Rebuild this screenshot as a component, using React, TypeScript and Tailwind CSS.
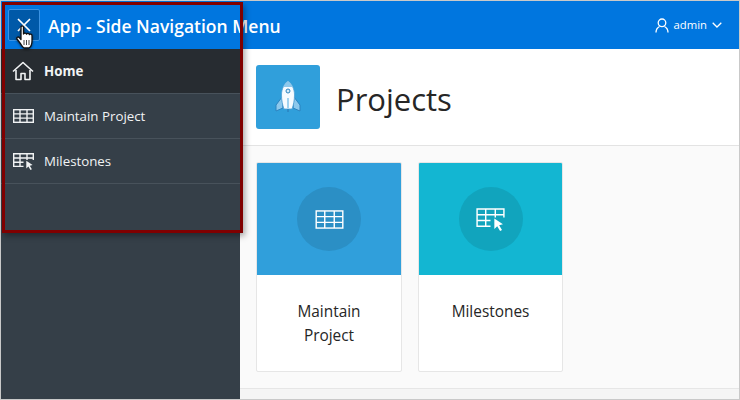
import React from "react";

const font = { fontFamily: '"Open Sans", "Noto Sans", sans-serif' };

function GridIcon({ className = "" }: { className?: string }) {
  return (
    <svg viewBox="0 0 30 20" className={className} fill="none" stroke="currentColor" strokeWidth="1.500">
      <rect x="1" y="1" width="28" height="18" />
      <path d="M1 7h28M1 13h28M10 1v18M20 1v18" />
    </svg>
  );
}

function GridCursorIcon({ className = "" }: { className?: string }) {
  return (
    <svg viewBox="0 0 30 24" className={className} fill="none" stroke="currentColor" strokeWidth="1.500">
      <path d="M15 19H1V1h28v9M1 7h28M1 13h14M10 1v18M20 1v9" />
      <path d="M19 11l0 11 3-3 3 5 2-1-3-5 4-1z" fill="currentColor" stroke="none" />
    </svg>
  );
}

function HomeIcon() {
  return (
    <svg viewBox="0 0 22 20" className="w-[22px] h-[20px]" fill="none" stroke="currentColor" strokeWidth="1.600" strokeLinejoin="round">
      <path d="M1 10.500 11 1.500l10 9" />
      <path d="M4 9v9.500h5v-6h4v6h5V9" />
    </svg>
  );
}

function Rocket() {
  return (
    <svg viewBox="0 0 26 34" className="w-[26px] h-[34px]">
      <path d="M7 17 1 25v6l7-3z" fill="#8cc8ec" stroke="#2a83c0" strokeWidth="1" />
      <path d="M19 17l6 8v6l-7-3z" fill="#8cc8ec" stroke="#2a83c0" strokeWidth="1" />
      <path d="M13 1c-4 3-6.500 8-6.500 14 0 5 1 10 2.500 14h8c1.500-4 2.500-9 2.500-14C19.500 9 17 4 13 1z" fill="#f6fbff" stroke="#4f9fd4" strokeWidth="0.800" />
      <path d="M13 1c-2 1.500-3.700 3.500-4.800 6h9.600C16.700 4.500 15 2.500 13 1z" fill="#8cc8ec" />
      <circle cx="13" cy="11" r="2" fill="#d8ecf9" stroke="#2a83c0" strokeWidth="1" />
      <path d="M13 18v10" stroke="#8cc8ec" strokeWidth="1.600" />
      <path d="M13 29v3" stroke="#2a83c0" strokeWidth="1.500" />
    </svg>
  );
}

function Hand() {
  return (
    <svg viewBox="0 0 18 24" className="absolute left-[15px] top-[24px] w-[18px] h-[24px] drop-shadow-[0_1px_1px_rgba(0,0,0,0.5)]">
      <path
        d="M5 2c0-1.500 2.500-1.500 2.500 0v7c.5-1.300 2.800-1.300 3 .2.500-1.200 2.700-1 2.900.5.600-1 2.600-.6 2.600 1V16c0 3-1.500 6-3 7H8c-1.500-1-2.500-3-4-5l-3-4c-.8-1.300 1-2.700 2.200-1.500L5 14.500z"
        fill="#fff"
        stroke="#111"
        strokeWidth="1.300"
        strokeLinejoin="round"
      />
      <path d="M8 15v5M10.500 15v5M13 15v5" stroke="#111" strokeWidth="0.800" />
    </svg>
  );
}

function NavRow({ icon, label, active }: { icon: React.ReactNode; label: string; active?: boolean }) {
  return (
    <div
      className={`h-[45px] flex items-center pl-[11px] border-b border-[#48525b] text-[13.300px] text-[#f1f3f4] ${
        active ? "bg-[#272c31] font-bold" : "bg-[#353f48]"
      }`}
    >
      <span className="w-[22px] flex justify-center">{icon}</span>
      <span className="ml-[10px] pt-[2px]">{label}</span>
    </div>
  );
}

function Card({
  width,
  color,
  circle,
  icon,
  label,
}: {
  width: string;
  color: string;
  circle: string;
  icon: React.ReactNode;
  label: React.ReactNode;
}) {
  return (
    <div className={`h-[210px] bg-white border border-[#e6e6e6] rounded-[2px] flex flex-col overflow-hidden ${width}`}>
      <div className={`h-[112px] flex items-center justify-center ${color}`}>
        <div className={`w-[64px] h-[64px] rounded-full flex items-center justify-center text-white ${circle}`}>{icon}</div>
      </div>
      <div className="flex-1 pt-[25px] px-[16px] text-center text-[15.400px] leading-[24px] text-[#262626]">{label}</div>
    </div>
  );
}

export default function App() {
  return (
    <div style={font} className="relative w-[740px] h-[400px] overflow-hidden bg-[#fafafa] border border-[#c9c9c9]">
      <header className="h-[48px] bg-[#0076df] flex items-center text-white">
        <div className="ml-[7px] w-[32px] h-[32px] rounded-[2px] bg-[#0059a8] border border-[#3b93e3] flex items-center justify-center">
          <svg viewBox="0 0 16 16" className="w-[16px] h-[16px]" stroke="#fff" strokeWidth="1.700" fill="none">
            <path d="M2 2l12 12M14 2 2 14" />
          </svg>
        </div>
        <span className="ml-[8px] pt-[2px] text-[17.500px] font-semibold">App - Side Navigation Menu</span>
        <div className="ml-auto mr-[17px] flex items-center text-[11.300px]">
          <svg viewBox="0 0 14 15" className="w-[14px] h-[15px]" fill="none" stroke="#fff" strokeWidth="1.300">
            <circle cx="7" cy="4.800" r="3.800" />
            <path d="M1 14.500c0-3 1.500-5 3.500-6M13 14.500c0-3-1.500-5-3.500-6" />
          </svg>
          <span className="ml-[5px] pt-[1px]">admin</span>
          <svg viewBox="0 0 10 6" className="ml-[5px] w-[10px] h-[6px]" fill="none" stroke="#fff" strokeWidth="1.300">
            <path d="M.7.700 5 5 9.300.700" />
          </svg>
        </div>
      </header>
      <div className="flex h-[350px]">
        <aside className="w-[239px] bg-[#353f48] shrink-0">
          <NavRow active icon={<HomeIcon />} label="Home" />
          <NavRow icon={<GridIcon className="w-[21px] h-[14px] [stroke-width:2]" />} label="Maintain Project" />
          <NavRow icon={<GridCursorIcon className="w-[21px] h-[17px] [stroke-width:2]" />} label="Milestones" />
        </aside>
        <main className="flex-1 flex flex-col">
          <div className="h-[97px] bg-white border-b border-[#e3e3e3] flex items-center pl-[16px]">
            <div className="w-[64px] h-[64px] bg-[#309fdb] rounded-[3px] flex items-center justify-center">
              <Rocket />
            </div>
            <h1 className="ml-[16px] pt-[4px] text-[31px] font-normal text-[#262626]">Projects</h1>
          </div>
          <div className="flex gap-[16px] pl-[16px] pt-[16px] h-[242px]">
            <Card
              width="w-[146px]"
              color="bg-[#309fdb]"
              circle="bg-[#2b8fc5]"
              icon={<GridIcon className="w-[29px] h-[19px]" />}
              label={<>Maintain<br />Project</>}
            />
            <Card
              width="w-[145px]"
              color="bg-[#13b6d2]"
              circle="bg-[#11a4bd]"
              icon={<GridCursorIcon className="w-[29px] h-[23px]" />}
              label="Milestones"
            />
          </div>
          <div className="flex-1 bg-[#f5f5f5] border-t border-[#e6e6e6]" />
        </main>
      </div>
      <div className="absolute left-[1px] top-[1px] w-[241px] h-[231px] border-[3px] border-[#800000] shadow-[2px_3px_6px_rgba(0,0,0,0.35)] pointer-events-none" />
      <Hand />
    </div>
  );
}
